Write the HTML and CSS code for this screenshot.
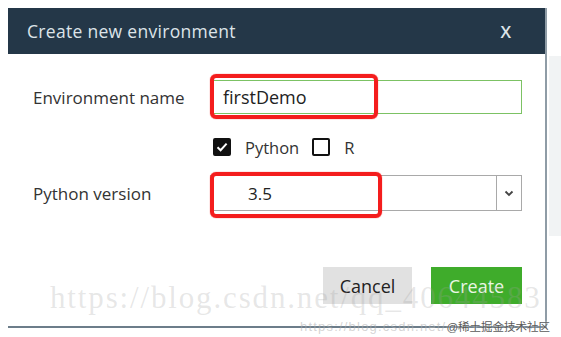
FILE: index.html
```html
<!DOCTYPE html>
<html lang="en">
<head>
    <meta charset="UTF-8">
    <meta name="viewport" content="width=device-width, initial-scale=1.0">
    <title>Create new environment</title>
    <link rel="stylesheet" href="styles.css">
</head>
<body>
    <div class="side-strip"></div>
    <div class="dialog">
        <div class="dialog-header">
            <span class="dialog-title">Create new environment</span>
            <span class="dialog-close">X</span>
        </div>

        <div class="dialog-body">
            <div class="field-row">
                <div class="field-label">Environment name</div>
                <div class="text-input">
                    firstDemo
                    <span class="mark mark-name"></span>
                </div>
            </div>

            <div class="lang-row">
                <span class="check checked">
                    <svg width="12" height="10" viewBox="0 0 12 10"><path d="M1.5 5.2 L4.6 8.2 L10.6 1.6" fill="none" stroke="#fff" stroke-width="2"/></svg>
                </span>
                <span class="check-label">Python</span>
                <span class="check"></span>
                <span class="check-label">R</span>
            </div>

            <div class="field-row">
                <div class="field-label">Python version</div>
                <div class="select-box">
                    <span class="select-value">3.5</span>
                    <span class="select-arrow">
                        <svg width="10" height="7" viewBox="0 0 10 7"><path d="M1.5 1.5 L5 5 L8.5 1.5" fill="none" stroke="#444" stroke-width="1.8"/></svg>
                    </span>
                    <span class="mark mark-version"></span>
                </div>
            </div>
        </div>

        <div class="dialog-footer">
            <button type="button" class="btn btn-cancel">Cancel</button>
            <button type="button" class="btn btn-create">Create</button>
        </div>

        <!-- screenshot watermarks -->
        <div class="watermark">https://blog.csdn.net/qq_40644583</div>
        <div class="watermark-small"><span class="wm-url">https://blog.csdn.net/</span><span class="wm-site">@稀土掘金技术社区</span></div>
    </div>
</body>
</html>
```

FILE: styles.css
```css
body {
    margin: 0;
    padding: 8px 0 0 8px;
    background-color: #fff;
    font-family: "Open Sans", "Noto Sans", sans-serif;
    position: relative;
    height: 337px;
    box-sizing: border-box;
    overflow: hidden;
}

.side-strip {
    position: absolute;
    left: 549px;
    top: 56px;
    width: 12px;
    height: 180px;
    background-color: #f1f3f4;
}

.dialog {
    position: relative;
    width: 539px;
    height: 320px;
    box-sizing: border-box;
    background-color: #fff;
    border-right: 2px solid #8f9ca6;
    border-bottom: 2px solid #6c7d8a;
    display: flex;
    flex-direction: column;
}

.dialog-header {
    height: 46px;
    background-color: #243748;
    display: flex;
    align-items: center;
    justify-content: space-between;
    padding: 0 34px 0 19px;
    color: #dde4e9;
}

.dialog-title {
    font-size: 17.5px;
    letter-spacing: 0.3px;
}

.dialog-close {
    font-size: 17px;
    font-weight: 600;
}

.dialog-body {
    padding: 26px 23px 0 25px;
}

.field-row {
    display: flex;
    align-items: center;
}

.field-label {
    width: 177px;
    font-size: 17px;
    color: #333;
}

.text-input {
    position: relative;
    width: 312px;
    height: 34px;
    box-sizing: border-box;
    border: 1px solid #7cc264;
    padding-left: 12px;
    display: flex;
    align-items: center;
    font-size: 18px;
    color: #222;
}

.lang-row {
    display: flex;
    align-items: center;
    margin: 24px 0 19px 180px;
    height: 18px;
    font-size: 16.5px;
    color: #333;
}

.check {
    width: 18px;
    height: 18px;
    box-sizing: border-box;
    border: 2px solid #111;
    border-radius: 2px;
    display: flex;
    align-items: center;
    justify-content: center;
}

.check.checked {
    background-color: #111;
}

.check-label {
    margin: 0 13px 0 14px;
}

.select-box {
    position: relative;
    width: 312px;
    height: 36px;
    box-sizing: border-box;
    border: 1px solid #a9a9a9;
    display: flex;
    align-items: center;
}

.select-value {
    flex: 1;
    padding-left: 37px;
    font-size: 17px;
    color: #222;
}

.select-arrow {
    width: 24px;
    height: 100%;
    border-left: 1px solid #a9a9a9;
    display: flex;
    align-items: center;
    justify-content: center;
}

.mark {
    position: absolute;
    border: 4px solid #f41d1d;
    border-radius: 6px;
    box-shadow: 0 0 1px #f41d1d;
}

.mark-name {
    left: -1px;
    top: -7px;
    width: 160px;
    height: 37px;
}

.mark-version {
    left: -1px;
    top: -4px;
    width: 164px;
    height: 38px;
}

.dialog-footer {
    display: flex;
    justify-content: flex-end;
    gap: 19px;
    margin-top: auto;
    padding: 0 23px 22px 0;
}

.btn {
    height: 37px;
    border: none;
    border-radius: 0;
    font-family: "Open Sans", "Noto Sans", sans-serif;
    font-size: 18px;
    cursor: pointer;
}

.btn-cancel {
    width: 89px;
    background-color: #e1e1e1;
    color: #222;
}

.btn-create {
    width: 91px;
    background-color: #3fac2b;
    color: #eaf6e4;
}

.watermark {
    position: absolute;
    left: 42px;
    top: 272px;
    font-family: "Liberation Serif", serif;
    font-size: 31px;
    letter-spacing: 1.85px;
    color: rgba(160, 160, 160, 0.26);
    white-space: nowrap;
    pointer-events: none;
}

.watermark-small {
    position: absolute;
    left: 292px;
    top: 309px;
    font-family: "Liberation Sans", "Noto Sans CJK SC", sans-serif;
    white-space: nowrap;
    pointer-events: none;
}

.wm-url {
    font-size: 13px;
    letter-spacing: 1.2px;
    color: rgba(175, 175, 175, 0.55);
}

.wm-site {
    font-size: 11.5px;
    color: #5a5a5a;
    text-shadow: 0 0 2px #fff;
}
```
